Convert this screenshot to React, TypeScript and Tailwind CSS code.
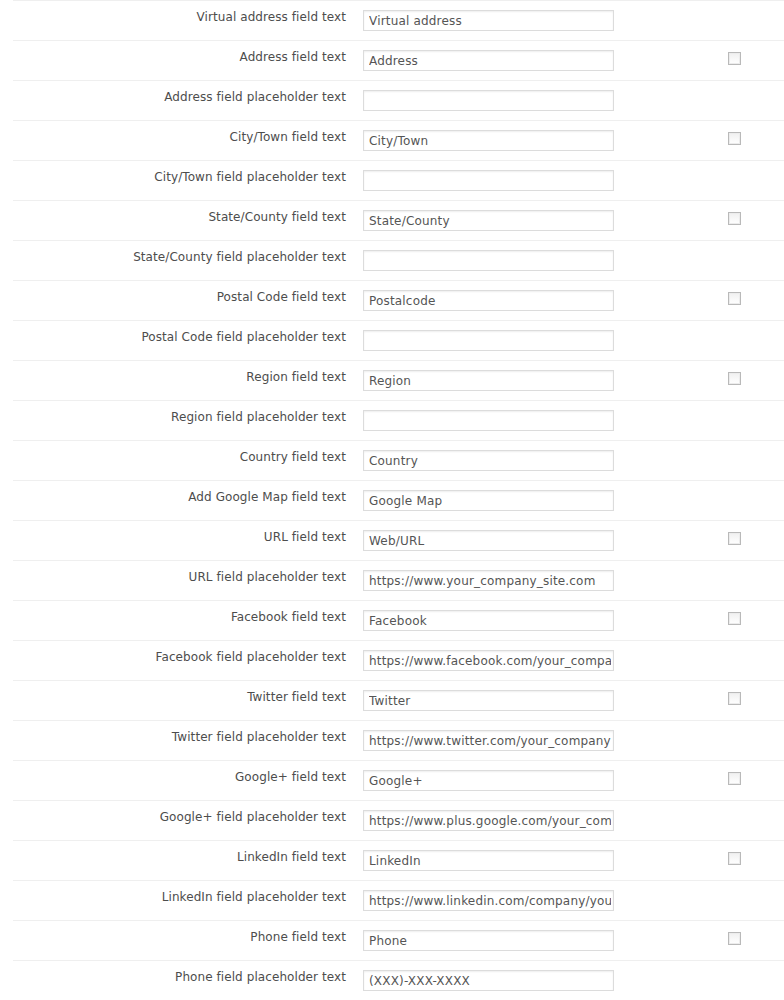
import React from 'react'

type Row = { label: string; value: string; check?: boolean }

const rows: Row[] = [
  { label: 'Virtual address field text', value: 'Virtual address' },
  { label: 'Address field text', value: 'Address', check: true },
  { label: 'Address field placeholder text', value: '' },
  { label: 'City/Town field text', value: 'City/Town', check: true },
  { label: 'City/Town field placeholder text', value: '' },
  { label: 'State/County field text', value: 'State/County', check: true },
  { label: 'State/County field placeholder text', value: '' },
  { label: 'Postal Code field text', value: 'Postalcode', check: true },
  { label: 'Postal Code field placeholder text', value: '' },
  { label: 'Region field text', value: 'Region', check: true },
  { label: 'Region field placeholder text', value: '' },
  { label: 'Country field text', value: 'Country' },
  { label: 'Add Google Map field text', value: 'Google Map' },
  { label: 'URL field text', value: 'Web/URL', check: true },
  { label: 'URL field placeholder text', value: 'https://www.your_company_site.com' },
  { label: 'Facebook field text', value: 'Facebook', check: true },
  { label: 'Facebook field placeholder text', value: 'https://www.facebook.com/your_company' },
  { label: 'Twitter field text', value: 'Twitter', check: true },
  { label: 'Twitter field placeholder text', value: 'https://www.twitter.com/your_company' },
  { label: 'Google+ field text', value: 'Google+', check: true },
  { label: 'Google+ field placeholder text', value: 'https://www.plus.google.com/your_company' },
  { label: 'LinkedIn field text', value: 'LinkedIn', check: true },
  { label: 'LinkedIn field placeholder text', value: 'https://www.linkedin.com/company/your_company' },
  { label: 'Phone field text', value: 'Phone', check: true },
  { label: 'Phone field placeholder text', value: '(XXX)-XXX-XXXX' },
]

export default function App() {
  return (
    <div className="w-[784px] h-[1000px] overflow-hidden bg-white pl-[13px] font-['DejaVu_Sans',sans-serif] text-[12px] text-[#4d4d4d]">
      {rows.map((r) => (
        <div key={r.label} className="flex items-start h-10 border-t border-[#efefef] pt-[9px]">
          <div className="w-[333px] shrink-0 text-right leading-[14px] tracking-[0.08px]">{r.label}</div>
          <input
            type="text"
            defaultValue={r.value}
            readOnly
            className="ml-[17px] w-[251px] h-[21px] border border-[#dcdcdc] shadow-[inset_0_1px_2px_rgba(0,0,0,0.07)] bg-white pl-[5px] pr-[2px] text-[12px] leading-[14px] tracking-[0.18px] text-[#555] outline-none font-['DejaVu_Sans',sans-serif]"
          />
          {r.check && (
            <div className="ml-[114px] mt-[2px] w-[13px] h-[13px] border border-[#b9b9b9] shadow-[inset_0_0_0_1px_#ececec] bg-gradient-to-b from-[#f0f0f0] to-white" />
          )}
        </div>
      ))}
    </div>
  )
}
